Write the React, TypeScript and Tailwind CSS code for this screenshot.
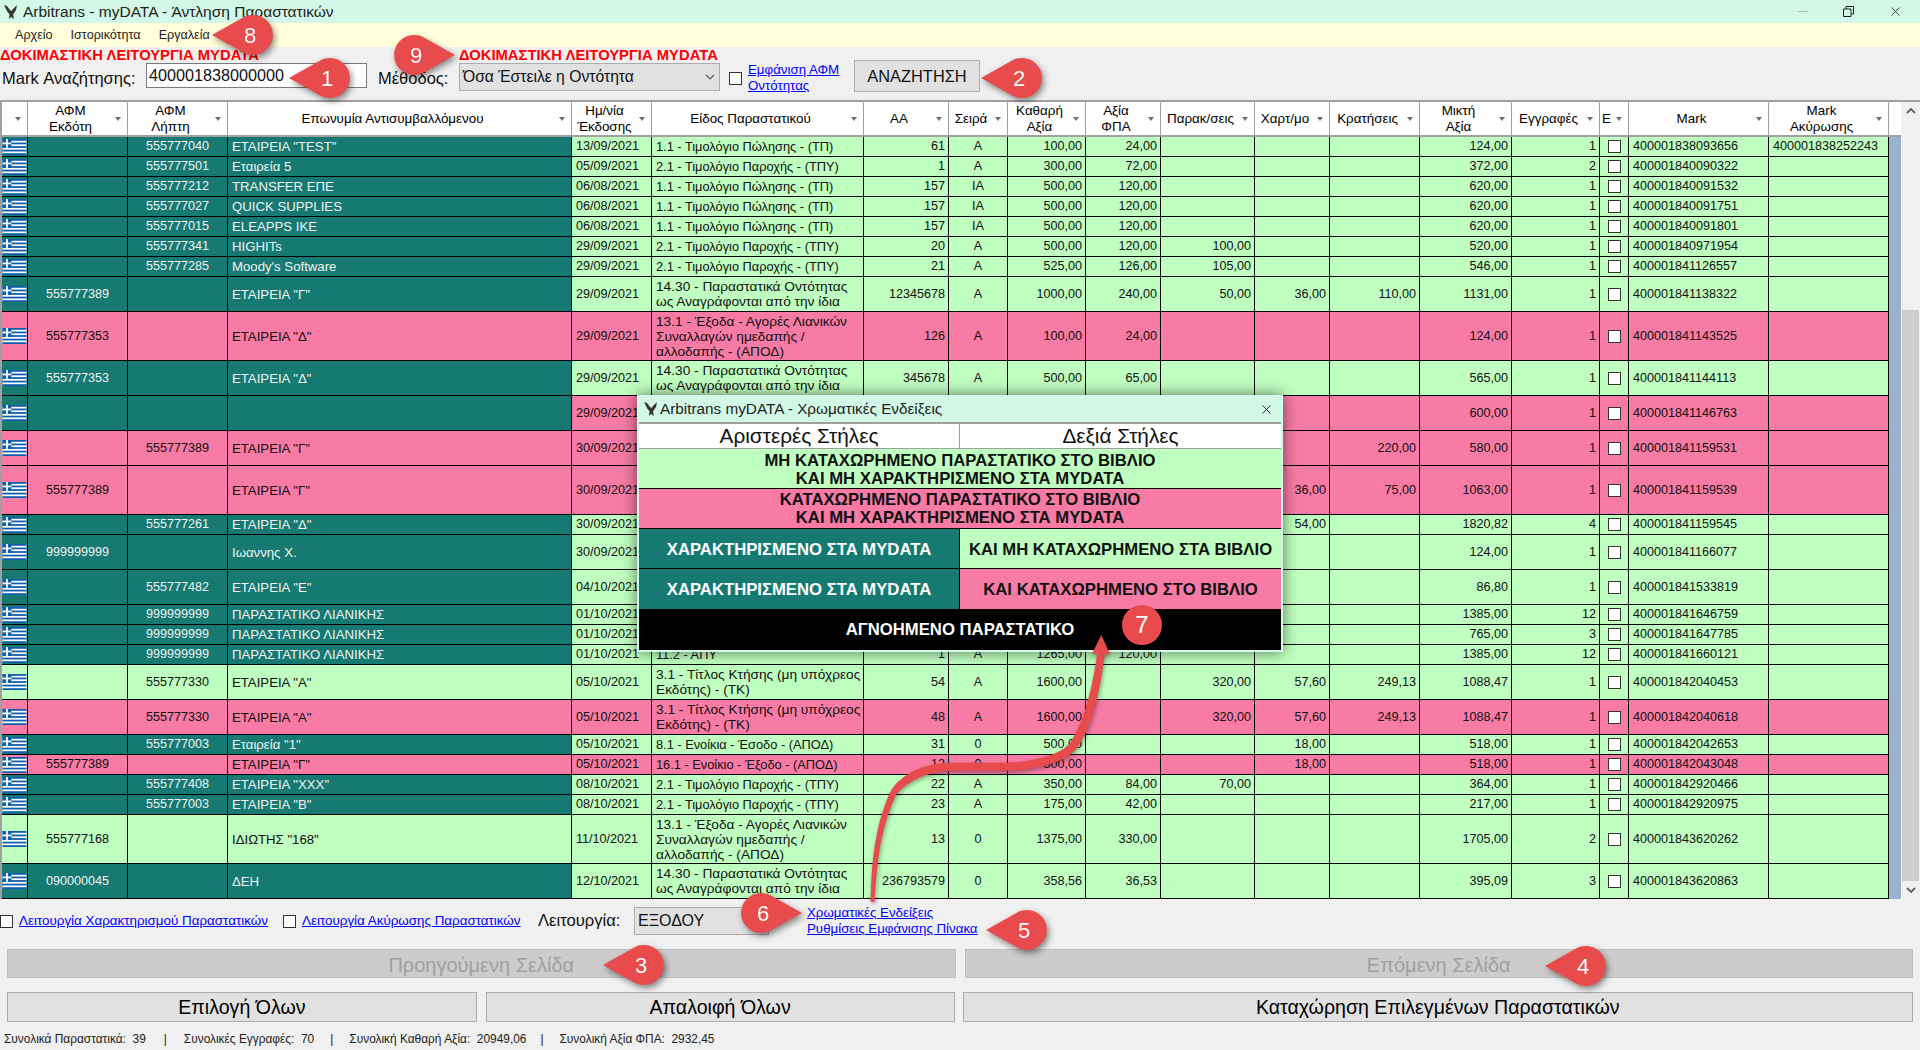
import type { ReactNode } from 'react';
import { X } from 'lucide-react';

type Tone = 'teal' | 'green' | 'pink';

interface Row {
  h: string;
  left: Tone;
  right: Tone;
  afmE?: string;
  afmL?: string;
  name?: string;
  date: string;
  type?: string;
  aa?: string;
  series?: string;
  net?: string;
  vat?: string;
  parak?: string;
  xart?: string;
  krat?: string;
  gross: string;
  count: string;
  mark: string;
  markAk?: string;
}

const TP = '1.1 - Τιμολόγιο Πώλησης - (ΤΠ)';
const TPY = '2.1 - Τιμολόγιο Παροχής - (ΤΠΥ)';
const ONT = '14.30 - Παραστατικά Οντότητας\nως Αναγράφονται από την ίδια';
const APOD = "13.1 - Έξοδα - Αγορές Λιανικών\nΣυναλλαγών ημεδαπής /\nαλλοδαπής - (ΑΠΟΔ)";
const TK = '3.1 - Τίτλος Κτήσης (μη υπόχρεος\nΕκδότης) - (ΤΚ)';
const H20 = 'h-5';
const H35 = 'h-[35px]';
const H49 = 'h-[49px]';

const rows: Row[] = [
  { h: H20, left: 'teal', right: 'green', afmL: '555777040', name: 'ΕΤΑΙΡΕΙΑ "TEST"', date: '13/09/2021', type: TP, aa: '61', series: 'Α', net: '100,00', vat: '24,00', gross: '124,00', count: '1', mark: '400001838093656', markAk: '400001838252243' },
  { h: H20, left: 'teal', right: 'green', afmL: '555777501', name: 'Εταιρεία 5', date: '05/09/2021', type: TPY, aa: '1', series: 'Α', net: '300,00', vat: '72,00', gross: '372,00', count: '2', mark: '400001840090322' },
  { h: H20, left: 'teal', right: 'green', afmL: '555777212', name: 'TRANSFER ΕΠΕ', date: '06/08/2021', type: TP, aa: '157', series: 'ΙΑ', net: '500,00', vat: '120,00', gross: '620,00', count: '1', mark: '400001840091532' },
  { h: H20, left: 'teal', right: 'green', afmL: '555777027', name: 'QUICK SUPPLIES', date: '06/08/2021', type: TP, aa: '157', series: 'ΙΑ', net: '500,00', vat: '120,00', gross: '620,00', count: '1', mark: '400001840091751' },
  { h: H20, left: 'teal', right: 'green', afmL: '555777015', name: 'ELEAPPS IKE', date: '06/08/2021', type: TP, aa: '157', series: 'ΙΑ', net: '500,00', vat: '120,00', gross: '620,00', count: '1', mark: '400001840091801' },
  { h: H20, left: 'teal', right: 'green', afmL: '555777341', name: 'HIGHITs', date: '29/09/2021', type: TPY, aa: '20', series: 'Α', net: '500,00', vat: '120,00', parak: '100,00', gross: '520,00', count: '1', mark: '400001840971954' },
  { h: H20, left: 'teal', right: 'green', afmL: '555777285', name: "Moody's Software", date: '29/09/2021', type: TPY, aa: '21', series: 'Α', net: '525,00', vat: '126,00', parak: '105,00', gross: '546,00', count: '1', mark: '400001841126557' },
  { h: H35, left: 'teal', right: 'green', afmE: '555777389', name: 'ΕΤΑΙΡΕΙΑ "Γ"', date: '29/09/2021', type: ONT, aa: '12345678', series: 'Α', net: '1000,00', vat: '240,00', parak: '50,00', xart: '36,00', krat: '110,00', gross: '1131,00', count: '1', mark: '400001841138322' },
  { h: H49, left: 'pink', right: 'pink', afmE: '555777353', name: 'ΕΤΑΙΡΕΙΑ "Δ"', date: '29/09/2021', type: APOD, aa: '126', series: 'Α', net: '100,00', vat: '24,00', gross: '124,00', count: '1', mark: '400001841143525' },
  { h: H35, left: 'teal', right: 'green', afmE: '555777353', name: 'ΕΤΑΙΡΕΙΑ "Δ"', date: '29/09/2021', type: ONT, aa: '345678', series: 'Α', net: '500,00', vat: '65,00', gross: '565,00', count: '1', mark: '400001841144113' },
  { h: H35, left: 'teal', right: 'pink', date: '29/09/2021', gross: '600,00', count: '1', mark: '400001841146763' },
  { h: H35, left: 'pink', right: 'pink', afmL: '555777389', name: 'ΕΤΑΙΡΕΙΑ "Γ"', date: '30/09/2021', krat: '220,00', gross: '580,00', count: '1', mark: '400001841159531' },
  { h: H49, left: 'pink', right: 'pink', afmE: '555777389', name: 'ΕΤΑΙΡΕΙΑ "Γ"', date: '30/09/2021', xart: '36,00', krat: '75,00', gross: '1063,00', count: '1', mark: '400001841159539' },
  { h: H20, left: 'teal', right: 'green', afmL: '555777261', name: 'ΕΤΑΙΡΕΙΑ "Δ"', date: '30/09/2021', xart: '54,00', gross: '1820,82', count: '4', mark: '400001841159545' },
  { h: H35, left: 'teal', right: 'green', afmE: '999999999', name: 'Ιωαννης Χ.', date: '30/09/2021', gross: '124,00', count: '1', mark: '400001841166077' },
  { h: H35, left: 'teal', right: 'green', afmL: '555777482', name: 'ΕΤΑΙΡΕΙΑ "Ε"', date: '04/10/2021', gross: '86,80', count: '1', mark: '400001841533819' },
  { h: H20, left: 'teal', right: 'green', afmL: '999999999', name: 'ΠΑΡΑΣΤΑΤΙΚΟ ΛΙΑΝΙΚΗΣ', date: '01/10/2021', gross: '1385,00', count: '12', mark: '400001841646759' },
  { h: H20, left: 'teal', right: 'green', afmL: '999999999', name: 'ΠΑΡΑΣΤΑΤΙΚΟ ΛΙΑΝΙΚΗΣ', date: '01/10/2021', gross: '765,00', count: '3', mark: '400001841647785' },
  { h: H20, left: 'teal', right: 'green', afmL: '999999999', name: 'ΠΑΡΑΣΤΑΤΙΚΟ ΛΙΑΝΙΚΗΣ', date: '01/10/2021', type: '11.2 - ΑΠΥ', aa: '1', series: 'Α', net: '1265,00', vat: '120,00', gross: '1385,00', count: '12', mark: '400001841660121' },
  { h: H35, left: 'green', right: 'green', afmL: '555777330', name: 'ΕΤΑΙΡΕΙΑ "Α"', date: '05/10/2021', type: TK, aa: '54', series: 'Α', net: '1600,00', parak: '320,00', xart: '57,60', krat: '249,13', gross: '1088,47', count: '1', mark: '400001842040453' },
  { h: H35, left: 'pink', right: 'pink', afmL: '555777330', name: 'ΕΤΑΙΡΕΙΑ "Α"', date: '05/10/2021', type: TK, aa: '48', series: 'Α', net: '1600,00', parak: '320,00', xart: '57,60', krat: '249,13', gross: '1088,47', count: '1', mark: '400001842040618' },
  { h: H20, left: 'teal', right: 'green', afmL: '555777003', name: 'Εταιρεία "1"', date: '05/10/2021', type: '8.1 - Ενοίκια - Έσοδο - (ΑΠΟΔ)', aa: '31', series: '0', net: '500,00', xart: '18,00', gross: '518,00', count: '1', mark: '400001842042653' },
  { h: H20, left: 'pink', right: 'pink', afmE: '555777389', name: 'ΕΤΑΙΡΕΙΑ "Γ"', date: '05/10/2021', type: '16.1 - Ενοίκιο - Έξοδο - (ΑΠΟΔ)', aa: '12', series: '0', net: '500,00', xart: '18,00', gross: '518,00', count: '1', mark: '400001842043048' },
  { h: H20, left: 'teal', right: 'green', afmL: '555777408', name: 'ΕΤΑΙΡΕΙΑ "XXX"', date: '08/10/2021', type: TPY, aa: '22', series: 'Α', net: '350,00', vat: '84,00', parak: '70,00', gross: '364,00', count: '1', mark: '400001842920466' },
  { h: H20, left: 'teal', right: 'green', afmL: '555777003', name: 'ΕΤΑΙΡΕΙΑ "Β"', date: '08/10/2021', type: TPY, aa: '23', series: 'Α', net: '175,00', vat: '42,00', gross: '217,00', count: '1', mark: '400001842920975' },
  { h: H49, left: 'green', right: 'green', afmE: '555777168', name: 'ΙΔΙΩΤΗΣ "168"', date: '11/10/2021', type: APOD, aa: '13', series: '0', net: '1375,00', vat: '330,00', gross: '1705,00', count: '2', mark: '400001843620262' },
  { h: H35, left: 'teal', right: 'green', afmE: '090000045', name: 'ΔΕΗ', date: '12/10/2021', type: ONT, aa: '236793579', series: '0', net: '358,56', vat: '36,53', gross: '395,09', count: '3', mark: '400001843620863' },
];

const toneClass: Record<Tone, string> = {
  teal: 'bg-[#167a72] text-[#f2f2f2]',
  green: 'bg-[#bfffbf] text-[#101010]',
  pink: 'bg-[#f77ba4] text-[#101010]',
};

const headers = [
  { label: '', w: 'w-[26px]' },
  { label: 'ΑΦΜ\nΕκδότη', w: 'w-[100px]' },
  { label: 'ΑΦΜ\nΛήπτη', w: 'w-[100px]' },
  { label: 'Επωνυμία Αντισυμβαλλόμενου', w: 'w-[344px]' },
  { label: 'Ημ/νία\nΈκδοσης', w: 'w-[80px]' },
  { label: 'Είδος Παραστατικού', w: 'w-[212px]' },
  { label: 'ΑΑ', w: 'w-[85px]' },
  { label: 'Σειρά', w: 'w-[59px]' },
  { label: 'Καθαρή\nΑξία', w: 'w-[78px]' },
  { label: 'Αξία\nΦΠΑ', w: 'w-[75px]' },
  { label: 'Παρακ/σεις', w: 'w-[94px]' },
  { label: 'Χαρτ/μο', w: 'w-[75px]' },
  { label: 'Κρατήσεις', w: 'w-[90px]' },
  { label: 'Μικτή\nΑξία', w: 'w-[92px]' },
  { label: 'Εγγραφές', w: 'w-[88px]' },
  { label: 'Ε', w: 'w-[29px]' },
  { label: 'Mark', w: 'w-[140px]' },
  { label: 'Mark\nΑκύρωσης', w: 'w-[120px]' },
];

const callouts = [
  { n: '8', dir: 'left', pos: 'left-[211px] top-[15px]' },
  { n: '9', dir: 'right', pos: 'left-[394px] top-[35px]' },
  { n: '1', dir: 'left', pos: 'left-[288px] top-[58px]' },
  { n: '2', dir: 'left', pos: 'left-[980px] top-[58px]' },
  { n: '3', dir: 'left', pos: 'left-[602px] top-[945px]' },
  { n: '4', dir: 'left', pos: 'left-[1544px] top-[946px]' },
  { n: '5', dir: 'left', pos: 'left-[985px] top-[910px]' },
  { n: '6', dir: 'right', pos: 'left-[741px] top-[893px]' },
];

function GreekFlag() {
  return (
    <svg viewBox="0 0 27 18" className="block h-4 w-[25px]">
      <rect width="27" height="18" fill="#fff" />
      {[0, 4, 8, 12, 16].map(y => (
        <rect key={y} y={y} width="27" height="2" fill="#0d5eaf" />
      ))}
      <rect width="10" height="10" fill="#0d5eaf" />
      <rect x="4" width="2" height="10" fill="#fff" />
      <rect y="4" width="10" height="2" fill="#fff" />
    </svg>
  );
}

function Logo() {
  return (
    <svg viewBox="0 0 13 14" className="h-[14px] w-[13px] shrink-0">
      <path d="M0 0 L3 1 L6 5 L7.5 6 L9 4 L13 0 L12 5 L10 8 L9 9.5 L10 14 L7 12 L5 14 L5.5 9 L3.5 7 Z" fill="#3a3430" />
    </svg>
  );
}

function HeaderArrow() {
  return <span className="absolute right-[6px] top-[15px] h-0 w-0 border-x-[3.5px] border-t-[4px] border-x-transparent border-t-[#707070]" />;
}

function Checkbox({ box = 'border-[#333] bg-white' }: { box?: string }) {
  return <span className={`inline-block h-[13px] w-[13px] border ${box}`} />;
}

function Callout({ n, dir, pos }: { n: string; dir: string; pos: string }) {
  return (
    <div className={`absolute ${pos} h-10 w-[62px] drop-shadow-[2px_3px_3px_rgba(0,0,0,0.45)]`}>
      <svg viewBox="0 0 62 40" className="absolute inset-0 h-10 w-[62px]">
        {dir === 'left' ? (
          <path d="M1 20 L32.2 2.5 A20 20 0 1 1 32.2 37.5 Z" fill="#e84b4b" />
        ) : (
          <path d="M61 20 L29.8 2.5 A20 20 0 1 0 29.8 37.5 Z" fill="#e84b4b" />
        )}
      </svg>
      <span className={`absolute top-0 flex h-10 w-10 items-center justify-center text-[22px] text-white ${dir === 'left' ? 'left-[19px]' : 'left-[2px]'}`}>{n}</span>
    </div>
  );
}

function TableHeader() {
  return (
    <thead>
      <tr>
        {headers.map((col, i) => (
          <th key={i} className={`${col.w} relative h-[35px] whitespace-pre-line border-b-2 border-r border-b-[#a0a0a0] border-r-[#a0a0a0] bg-white pr-4 pl-[2px] align-middle text-[13.4px] font-normal leading-[16px] text-black ${col.label === 'Ε' ? 'text-left' : 'text-center'}`}>
            {col.label}
            <HeaderArrow />
          </th>
        ))}
        <th className="w-3 border-b-2 border-b-[#a0a0a0] bg-white" />
      </tr>
    </thead>
  );
}

function Cell({ tone, cls = '', children }: { tone: Tone; cls?: string; children?: ReactNode }) {
  return <td className={`overflow-hidden whitespace-pre-line border-b border-r border-black align-middle ${toneClass[tone]} ${cls}`}>{children}</td>;
}

function DataRow({ r }: { r: Row }) {
  const num = 'pr-[3px] text-right';
  const typeSize = r.type?.includes('\n') ? 'text-[13.7px]' : 'text-[12.8px]';
  return (
    <tr className={r.h}>
      <td className={`border-b border-r border-black p-0 align-middle ${toneClass[r.left]}`}><GreekFlag /></td>
      <Cell tone={r.left} cls="text-center">{r.afmE}</Cell>
      <Cell tone={r.left} cls="text-center">{r.afmL}</Cell>
      <Cell tone={r.left} cls="pl-1 text-[13.2px]">{r.name}</Cell>
      <Cell tone={r.right} cls="pl-1">{r.date}</Cell>
      <Cell tone={r.right} cls={`pl-1 ${typeSize}`}>{r.type}</Cell>
      <Cell tone={r.right} cls={num}>{r.aa}</Cell>
      <Cell tone={r.right} cls="text-center">{r.series}</Cell>
      <Cell tone={r.right} cls={num}>{r.net}</Cell>
      <Cell tone={r.right} cls={num}>{r.vat}</Cell>
      <Cell tone={r.right} cls={num}>{r.parak}</Cell>
      <Cell tone={r.right} cls={num}>{r.xart}</Cell>
      <Cell tone={r.right} cls={num}>{r.krat}</Cell>
      <Cell tone={r.right} cls={num}>{r.gross}</Cell>
      <Cell tone={r.right} cls={num}>{r.count}</Cell>
      <Cell tone={r.right} cls="text-center"><span className="flex items-center justify-center"><Checkbox /></span></Cell>
      <Cell tone={r.right} cls="pl-1">{r.mark}</Cell>
      <Cell tone={r.right} cls="pl-1">{r.markAk}</Cell>
      <td className="bg-[#9ab2d0]" />
    </tr>
  );
}

function Scrollbar() {
  return (
    <div className="flex w-[19px] flex-col bg-[#f0f0f0]">
      <div className="flex h-[18px] items-center justify-center text-[#606060]">
        <svg viewBox="0 0 10 6" className="h-[6px] w-[10px]"><path d="M1 5 L5 1 L9 5" fill="none" stroke="currentColor" strokeWidth="1.8" /></svg>
      </div>
      <div className="h-[190px]" />
      <div className="mx-[1px] flex-1 bg-[#cdcdcd]" />
      <div className="flex h-[18px] items-center justify-center text-[#606060]">
        <svg viewBox="0 0 10 6" className="h-[6px] w-[10px]"><path d="M1 1 L5 5 L9 1" fill="none" stroke="currentColor" strokeWidth="1.8" /></svg>
      </div>
    </div>
  );
}

function ComboArrow() {
  return (
    <svg viewBox="0 0 10 6" className="h-[6px] w-[10px] shrink-0 text-[#555]"><path d="M1 1 L5 5 L9 1" fill="none" stroke="currentColor" strokeWidth="1.2" /></svg>
  );
}

function ColorLegend() {
  return (
    <div className="absolute left-[637px] top-[395px] h-[257px] w-[646px] bg-[#d2f9e7] px-[2px] shadow-[0_0_14px_rgba(0,0,0,0.55)]">
      <div className="flex h-[27px] items-center pl-[5px] pt-[1px] text-[15.3px] text-[#222]">
        <Logo />
        <span className="ml-[3px]">Arbitrans myDATA - Χρωματικές Ενδείξεις</span>
        <X className="ml-auto mr-[7px] h-[15px] w-[15px] text-[#222]" strokeWidth={1.5} />
      </div>
      <div className="grid grid-cols-2 border-t-2 border-[#a0a0a0] text-center font-bold text-[16.7px] leading-[18px] text-[#111]">
        <div className="flex h-[25px] items-center justify-center border-b border-r border-[#a0a0a0] bg-white text-[20.8px] font-normal">Αριστερές Στήλες</div>
        <div className="flex h-[25px] items-center justify-center border-b border-[#a0a0a0] bg-white text-[20.8px] font-normal">Δεξιά Στήλες</div>
        <div className="col-span-2 flex h-10 items-center justify-center whitespace-pre-line border-b border-black bg-[#bfffbf] pt-[2px]">{'ΜΗ ΚΑΤΑΧΩΡΗΜΕΝΟ ΠΑΡΑΣΤΑΤΙΚΟ ΣΤΟ ΒΙΒΛΙΟ\nΚΑΙ ΜΗ ΧΑΡΑΚΤΗΡΙΣΜΕΝΟ ΣΤΑ MYDATA'}</div>
        <div className="col-span-2 flex h-10 items-center justify-center whitespace-pre-line border-b border-black bg-[#f77ba4]">{'ΚΑΤΑΧΩΡΗΜΕΝΟ ΠΑΡΑΣΤΑΤΙΚΟ ΣΤΟ ΒΙΒΛΙΟ\nΚΑΙ ΜΗ ΧΑΡΑΚΤΗΡΙΣΜΕΝΟ ΣΤΑ MYDATA'}</div>
        <div className="flex h-10 items-center justify-center border-b border-r border-black bg-[#167a72] pt-[2px] text-white">ΧΑΡΑΚΤΗΡΙΣΜΕΝΟ ΣΤΑ MYDATA</div>
        <div className="flex h-10 items-center justify-center border-b border-black bg-[#bfffbf] pt-[2px]">ΚΑΙ ΜΗ ΚΑΤΑΧΩΡΗΜΕΝΟ ΣΤΑ ΒΙΒΛΙΟ</div>
        <div className="flex h-10 items-center justify-center border-r border-black bg-[#167a72] pt-[2px] text-white">ΧΑΡΑΚΤΗΡΙΣΜΕΝΟ ΣΤΑ MYDATA</div>
        <div className="flex h-10 items-center justify-center bg-[#f77ba4] pt-[2px]">ΚΑΙ ΚΑΤΑΧΩΡΗΜΕΝΟ ΣΤΟ ΒΙΒΛΙΟ</div>
        <div className="col-span-2 flex h-[41px] items-center justify-center bg-black text-white">ΑΓΝΟΗΜΕΝΟ ΠΑΡΑΣΤΑΤΙΚΟ</div>
      </div>
    </div>
  );
}

function LegendArrow() {
  return (
    <svg viewBox="0 0 260 280" className="absolute left-[860px] top-[630px] h-[280px] w-[260px] drop-shadow-[1px_2px_2px_rgba(0,0,0,0.35)]">
      <path d="M10.6 271.7 C11.5 240 13 199 30.5 161.5 C40 145 63 133 90 132.7 L147 132.7 C170 132 198 126 209.5 114 C224 93 232 60 237.5 22 L245 23 C240 62 232 98 216 119.5 C203 134 172 140 147 140.7 L90 140.7 C68 141 46 152 36 165 C19 201 16.5 240 14.6 271.7 Z" fill="#e84b4b" />
      <path d="M241.3 5 L232 24 L250 24 Z" fill="#e84b4b" />
    </svg>
  );
}

export default function App() {
  return (
    <div className="relative flex h-[1050px] w-[1920px] flex-col overflow-hidden bg-[#f0f0f0] font-['Liberation_Sans',Arial,sans-serif] text-[#111]">
      {/* title bar */}
      <div className="flex h-[23px] items-center bg-[#d2f9e7] pl-[4px] text-[15.5px] text-[#222]">
        <Logo />
        <span className="ml-[6px]">Arbitrans - myDATA - Άντληση Παραστατικών</span>
        <div className="ml-auto flex items-center">
          <span className="h-px w-[10px] bg-[#b5b5b5]" />
          <svg viewBox="0 0 11 11" className="ml-[35px] h-[11px] w-[11px]"><path d="M0.5 3 H8 V10.5 H0.5 Z M3 3 V0.5 H10.5 V8 H8" fill="none" stroke="#222" strokeWidth="1" /></svg>
          <X className="ml-[34px] mr-[17px] h-[15px] w-[15px] text-[#222]" strokeWidth={1.3} />
        </div>
      </div>

      {/* menu */}
      <div className="flex h-6 items-center gap-[18px] bg-[#ffffdc] pl-[15px] text-[12.6px] text-[#222]">
        <span>Αρχείο</span>
        <span>Ιστορικότητα</span>
        <span>Εργαλεία</span>
      </div>

      {/* search bar */}
      <div className="mt-[2px] flex h-[11px] text-[14.8px] font-bold leading-[12px] text-[#ff0000]">
        <span className="w-[459px]">ΔΟΚΙΜΑΣΤΙΚΗ ΛΕΙΤΟΥΡΓΙΑ MYDATA</span>
        <span>ΔΟΚΙΜΑΣΤΙΚΗ ΛΕΙΤΟΥΡΓΙΑ MYDATA</span>
      </div>
      <div className="mb-2 flex h-8 items-start text-[16.5px]">
        <span className="ml-[2px] mt-[6px] w-[144px]">Mark Αναζήτησης:</span>
        <div className="mt-[3px] flex h-[25px] w-[221px] items-center border border-[#7a7a7a] bg-white pl-[2px] text-[16.2px]">400001838000000</div>
        <span className="ml-[11px] mt-[6px] w-[81px]">Μέθοδος:</span>
        <div className="mt-[3px] flex h-7 w-[261px] items-center justify-between border border-[#adadad] bg-[#e1e1e1] pl-[3px] pr-[4px] text-[15.7px]">
          <span>Όσα Έστειλε η Οντότητα</span>
          <ComboArrow />
        </div>
        <span className="ml-[9px] mt-[12px] flex"><Checkbox /></span>
        <a className="ml-[6px] mt-[2px] w-[96px] text-[13.3px] leading-[16px] text-[#0000ff] underline">Εμφάνιση ΑΦΜ Οντότητας</a>
        <button className="ml-[10px] h-8 w-[126px] border border-[#adadad] bg-[#e1e1e1] text-[16.4px]">ΑΝΑΖΗΤΗΣΗ</button>
      </div>

      {/* data grid */}
      <div className="flex border-t-2 border-[#a0a0a0]">
        <div className="w-[1901px] border-l-2 border-[#a0a0a0]">
          <table className="w-[1899px] table-fixed border-separate border-spacing-0 text-[12.6px] leading-[15px]">
            <TableHeader />
            <tbody>
              {rows.map(r => <DataRow key={r.mark} r={r} />)}
            </tbody>
          </table>
        </div>
        <Scrollbar />
      </div>

      {/* options row */}
      <div className="mt-[8px] flex h-7 items-center text-[13.4px]">
        <Checkbox />
        <a className="ml-[6px] w-[264px] text-[#0000ff] underline">Λειτουργία Χαρακτηρισμού Παραστατικών</a>
        <Checkbox />
        <a className="ml-[6px] w-[236px] text-[#0000ff] underline">Λειτουργία Ακύρωσης Παραστατικών</a>
        <span className="w-[96px] text-[16.6px]">Λειτουργία:</span>
        <div className="flex h-7 w-[135px] items-center justify-between border border-[#adadad] bg-[#e1e1e1] pl-[3px] pr-[4px] text-[16px]">
          <span>ΕΞΟΔΟΥ</span>
          <ComboArrow />
        </div>
        <div className="ml-[38px] flex flex-col text-[13.3px] leading-[16px]">
          <a className="text-[#0000ff] underline">Χρωματικές Ενδείξεις</a>
          <a className="text-[#0000ff] underline">Ρυθμίσεις Εμφάνισης Πίνακα</a>
        </div>
      </div>

      {/* paging */}
      <div className="mt-[14px] flex h-[29px] gap-[9px] px-[7px] text-[20px] text-[#a0a0a0]">
        <button className="flex-1 border border-[#bfbfbf] bg-[#cccccc]">Προηγούμενη Σελίδα</button>
        <button className="flex-1 border border-[#bfbfbf] bg-[#cccccc]">Επόμενη Σελίδα</button>
      </div>

      {/* actions */}
      <div className="mt-[14px] flex h-[30px] px-[7px] text-[19.6px] text-black">
        <button className="w-[470px] border border-[#adadad] bg-[#e1e1e1]">Επιλογή Όλων</button>
        <button className="ml-[9px] w-[469px] border border-[#adadad] bg-[#e1e1e1]">Απαλοιφή Όλων</button>
        <button className="ml-[8px] w-[951px] border border-[#adadad] bg-[#e1e1e1]">Καταχώρηση Επιλεγμένων Παραστατικών</button>
      </div>

      {/* totals */}
      <div className="ml-[4px] mt-[11px] flex h-[14px] items-center whitespace-pre text-[11.9px] text-[#222]">
        <span>Συνολικά Παραστατικά:  39</span>
        <span className="ml-[18px]">|</span>
        <span className="ml-[17px]">Συνολικές Εγγραφές:  70</span>
        <span className="ml-[16px]">|</span>
        <span className="ml-[16px]">Συνολική Καθαρή Αξία:  20949,06</span>
        <span className="ml-[14px]">|</span>
        <span className="ml-[16px]">Συνολική Αξία ΦΠΑ:  2932,45</span>
      </div>

      <ColorLegend />
      <LegendArrow />
      <div className="absolute left-[1122px] top-[605px] flex h-10 w-10 items-center justify-center rounded-full bg-[#e84b4b] text-[24px] text-white">7</div>
      {callouts.map(c => <Callout key={c.n} {...c} />)}
    </div>
  );
}
